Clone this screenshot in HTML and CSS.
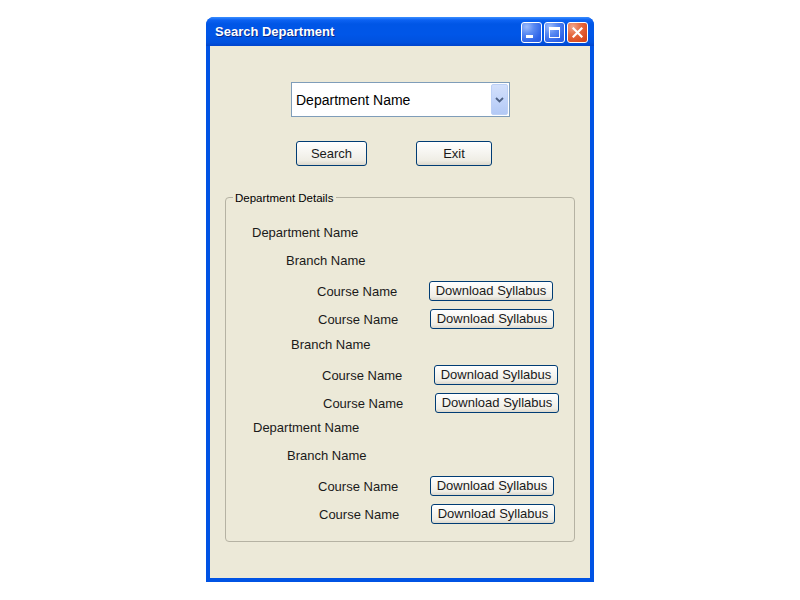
FILE: index.html
```html
<!DOCTYPE html>
<html>
<head>
<meta charset="utf-8">
<title>Search Department</title>
<link rel="stylesheet" href="styles.css">
</head>
<body>
<div class="window">
  <div class="titlebar">
    <span class="title">Search Department</span>
    <div class="controls">
      <span class="ctl ctl-min"><span class="min-bar"></span></span>
      <span class="ctl ctl-max"><span class="max-box"></span></span>
      <span class="ctl ctl-close">
        <svg width="11" height="11" viewBox="0 0 11 11"><path d="M1.5 1.5 L9.5 9.5 M9.5 1.5 L1.5 9.5" stroke="#fff" stroke-width="2.2" stroke-linecap="square" fill="none"/></svg>
      </span>
    </div>
  </div>
  <div class="client">
    <div class="combo">
      <span class="combo-text">Department Name</span>
      <span class="combo-btn">
        <svg width="9" height="6" viewBox="0 0 9 6"><path d="M1 1 L4.5 4.5 L8 1" stroke="#4d6185" stroke-width="1.8" fill="none"/></svg>
      </span>
    </div>
    <div class="actions">
      <button class="btn btn-search">Search</button>
      <button class="btn btn-exit">Exit</button>
    </div>
    <div class="group">
      <span class="legend">Department Details</span>
      <div class="dept">
        <div class="label">Department Name</div>
        <div class="branch">
          <div class="label">Branch Name</div>
          <div class="course"><span class="course-label">Course Name</span><button class="btn btn-dl">Download Syllabus</button></div>
          <div class="course"><span class="course-label">Course Name</span><button class="btn btn-dl">Download Syllabus</button></div>
        </div>
        <div class="branch branch-shift">
          <div class="label">Branch Name</div>
          <div class="course"><span class="course-label">Course Name</span><button class="btn btn-dl">Download Syllabus</button></div>
          <div class="course"><span class="course-label">Course Name</span><button class="btn btn-dl">Download Syllabus</button></div>
        </div>
      </div>
      <div class="dept">
        <div class="label">Department Name</div>
        <div class="branch">
          <div class="label">Branch Name</div>
          <div class="course"><span class="course-label">Course Name</span><button class="btn btn-dl">Download Syllabus</button></div>
          <div class="course"><span class="course-label">Course Name</span><button class="btn btn-dl">Download Syllabus</button></div>
        </div>
      </div>
    </div>
  </div>
</div>
</body>
</html>
```

FILE: styles.css
```css
html, body {
  margin: 0;
  padding: 0;
  background: #ffffff;
}

body {
  font-family: "Liberation Sans", Arial, sans-serif;
  color: #1a1a1a;
}

.window {
  margin: 17px 0 0 206px;
  width: 388px;
  height: 565px;
  box-sizing: border-box;
  padding-bottom: 4px;
  background: #0053e4;
  border-radius: 8px 8px 0 0;
  display: flex;
  flex-direction: column;
}

.titlebar {
  height: 29px;
  flex-shrink: 0;
  display: flex;
  align-items: center;
  padding: 0 6px 0 9px;
  border-radius: 8px 8px 0 0;
  background: linear-gradient(to bottom, #3b8fff 0px, #0c62f2 3px, #0056e6 7px, #0056e8 60%, #0051de 88%, #0044cc 100%);
}

.title {
  flex: 1;
  color: #fff;
  font-weight: bold;
  font-size: 13px;
  text-shadow: 1px 1px 0 #0a2a8c;
}

.controls {
  display: flex;
  gap: 2px;
  align-self: flex-start;
  padding-top: 5px;
}

.ctl {
  width: 21px;
  height: 21px;
  box-sizing: border-box;
  border: 1px solid #fff;
  border-radius: 3px;
  display: flex;
  align-items: center;
  justify-content: center;
}

.ctl-min, .ctl-max {
  background: radial-gradient(circle at 25% 20%, #9dbcfc 0%, #5a8af2 35%, #2d63e8 75%, #2a5be0 100%);
}

.ctl-close {
  background: radial-gradient(circle at 25% 20%, #f3a68c 0%, #e6693f 40%, #d84a1f 80%, #cf4418 100%);
}

.ctl-min {
  align-items: flex-end;
  justify-content: flex-start;
  padding: 0 0 4px 4px;
}

.min-bar {
  width: 7px;
  height: 3px;
  background: #fff;
}

.max-box {
  width: 11px;
  height: 11px;
  box-sizing: border-box;
  border: 1px solid #fff;
  border-top-width: 3px;
}

.client {
  flex: 1;
  margin: 0 4px;
  background: #ece9d8;
  display: flex;
  flex-direction: column;
}

.combo {
  margin: 36px 0 0 81px;
  width: 219px;
  height: 35px;
  box-sizing: border-box;
  border: 1px solid #7f9db9;
  background: #fff;
  padding: 1px;
  display: flex;
  align-items: stretch;
}

.combo-text {
  flex: 1;
  font-size: 14px;
  line-height: 33px;
  height: 31px;
  padding-left: 3px;
  color: #000;
}

.combo-btn {
  width: 17px;
  box-sizing: border-box;
  border: 1px solid #bcd0f6;
  border-radius: 2px;
  background: linear-gradient(to bottom, #d3e0fb 0%, #c3d5fa 50%, #b3c9f5 100%);
  display: flex;
  align-items: center;
  justify-content: center;
}

.actions {
  margin-top: 24px;
  padding-left: 86px;
  display: flex;
  gap: 49px;
}

.btn {
  font-family: "Liberation Sans", Arial, sans-serif;
  font-size: 13px;
  color: #1a1a1a;
  box-sizing: border-box;
  border: 1px solid #003c74;
  border-radius: 3px;
  background: linear-gradient(to bottom, #ffffff 0%, #f7f6f2 40%, #efede5 80%, #dcd8cd 100%);
  padding: 0;
  margin: 0;
  flex-shrink: 0;
}

.btn-search {
  width: 71px;
  height: 25px;
}

.btn-exit {
  width: 76px;
  height: 25px;
}

.group {
  position: relative;
  margin: 31px 15px 0;
  border: 1px solid #b5b2a3;
  border-radius: 4px;
  padding: 24px 0 17px;
}

.legend {
  position: absolute;
  top: -7px;
  left: 7px;
  padding: 0 3px 0 2px;
  background: #ece9d8;
  font-size: 11.5px;
  line-height: 14px;
  color: #000;
}

.dept {
  padding-left: 26px;
}

.dept + .dept {
  margin-top: 4px;
  padding-left: 27px;
}

.label {
  height: 20px;
  line-height: 22px;
  font-size: 13px;
  white-space: nowrap;
}

.branch {
  margin-top: 8px;
  margin-left: 34px;
}

.branch + .branch {
  margin-top: 5px;
}

.branch-shift {
  margin-left: 39px;
}

.course {
  display: flex;
  align-items: flex-start;
  height: 20px;
  margin-top: 11px;
  margin-left: 31px;
}

.course + .course {
  margin-top: 8px;
  margin-left: 32px;
}

.course-label {
  width: 112px;
  height: 20px;
  flex-shrink: 0;
  font-size: 13px;
  line-height: 22px;
  white-space: nowrap;
}

.btn-dl {
  width: 124px;
  height: 20px;
  line-height: 18px;
}
```
